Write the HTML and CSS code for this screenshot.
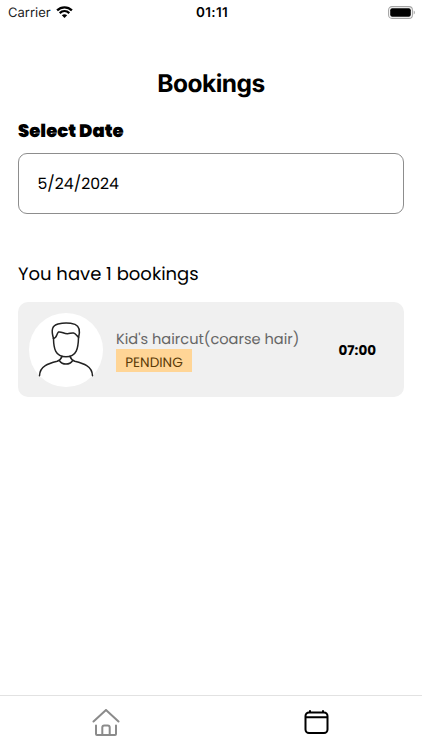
FILE: index.html
```html
<!DOCTYPE html>
<html lang="en">
  <head>
    <meta charset="utf-8" />
    <title>Bookings</title>
    <link rel="stylesheet" href="styles.css">
  </head>
  <body>
    <header class="status">
      <div class="carrier">
        <span>Carrier</span>
        <svg width="17" height="12" viewBox="0 0 17 12">
          <path d="M1.100 4.400C5.300.3 11.700.3 15.900 4.400M3.700 7.100c2.800-2.600 6.800-2.600 9.600 0" fill="none" stroke="#000" stroke-width="2.300" />
          <path d="M5.800 9.300c1.600-1.400 3.800-1.400 5.400 0L8.500 12z" />
        </svg>
      </div>
      <span class="clock">01:11</span>
      <svg class="battery" width="28" height="13" viewBox="0 0 28 13">
        <rect x=".6" y=".6" width="23.800" height="11.800" rx="3.400" fill="none" stroke="#a5a5a5" stroke-width="1.100" />
        <rect x="2.200" y="2.200" width="20.600" height="8.600" rx="2" />
        <path d="M25.700 4.500v4c1.600-.7 1.600-3.300 0-4z" fill="#a5a5a5" />
      </svg>
    </header>

    <main>
      <h1>Bookings</h1>
      <h2>Select Date</h2>
      <div class="date"><span>5/24/2024</span></div>

      <p class="count">You have 1 bookings</p>
      <section class="booking">
        <div class="avatar">
          <svg width="74" height="74" viewBox="0 0 74 74" fill="none" stroke="#222" stroke-width="1.500" stroke-linecap="round" stroke-linejoin="round">
            <path d="M24.500 25.500C22 17 23 12.500 29 11c6-1.500 12-1.300 17 .4 4.500 1.800 5.500 6 3.500 13.400" />
            <path d="M24.500 25.500c3.500-.3 2.800-4.500 5-6.500 3-.8 5.500 2 9 1.800 2.500-.1 3.500-1.100 6-.8 2 .3 3 2.500 5 4" />
            <path d="M24.500 25.500c.2 10 1.700 18.300 12.500 18.300s12.300-8.800 12.500-19.300" />
            <path d="M33 43.300c-.7 2.500-2.500 4-4.700 5-8.500 2.200-17.500 4.500-17.800 14.500M41 43.300c.7 2.500 2.500 4 4.700 5 8.500 2.200 17.500 4.500 17.800 14.500" />
            <path d="M30.300 47.500c3.200 4.800 10.200 4.800 13.400 0" />
          </svg>
        </div>
        <div class="info">
          <p class="service">Kid's haircut(coarse hair)</p>
          <span class="state">PENDING</span>
        </div>
        <time>07:00</time>
      </section>
    </main>

    <nav class="tabs">
      <a class="tab">
        <svg width="28" height="28" viewBox="0 0 28 28" fill="none" stroke="#8b8b8b" stroke-width="2" stroke-linecap="round" stroke-linejoin="round">
          <path d="M1.500 12.500 14 .9l12.500 11.600" />
          <path d="M4 16.500V25a1 1 0 0 0 1 1h18a1 1 0 0 0 1-1v-8.500" />
          <path d="M10.300 26v-7.500a2 2 0 0 1 2-2h3.400a2 2 0 0 1 2 2V26" />
        </svg>
      </a>
      <a class="tab">
        <svg width="26" height="26" viewBox="0 0 26 26" fill="none" stroke="#000" stroke-width="2" stroke-linecap="round">
          <rect x="1.500" y="2.500" width="22" height="20.500" rx="3.500" />
          <path d="M2 7.300h21M6 1v1M19 1v1" />
        </svg>
      </a>
    </nav>
  </body>
</html>
```

FILE: styles.css
```css
body {
  margin: 0;
  height: 750px;
  display: flex;
  flex-direction: column;
  overflow: hidden;
  background: #fff;
  color: #000;
  font-family: Poppins, Inter, sans-serif;
  text-rendering: geometricPrecision;
}

h1, h2, p {
  margin: 0;
}
svg {
  display: block;
}

.status {
  height: 24px;
  padding: 0 6px 0 8px;
  display: grid;
  grid-template-columns: 1fr auto 1fr;
  align-items: center;
  font-family: Inter, sans-serif;
  font-size: 13px;
}
.carrier {
  display: flex;
  align-items: center;
  gap: 5px;
  color: #222;
}
.carrier span {
  padding-top: 1px;
}
.clock {
  padding-top: 1px;
  font-size: 13.5px;
  font-weight: 600;
  letter-spacing: 0.3px;
}
.battery {
  justify-self: end;
}

main {
  flex: 1;
  padding: 0 18px;
}
h1 {
  margin-top: 42px;
  font: 700 24.5px/34px Inter, sans-serif;
  letter-spacing: -0.5px;
  text-align: center;
}
h2 {
  margin-top: 18px;
  font-size: 18px;
  font-weight: 900;
  line-height: 28px;
}
.date {
  height: 59px;
  margin-top: 7px;
  padding-left: 18.5px;
  display: flex;
  align-items: center;
  border: 1px solid #8d8d8d;
  border-radius: 9px;
  font-size: 15.7px;
}
.date span {
  padding-top: 1px;
}
.count {
  margin-top: 46px;
  font-size: 18px;
  line-height: 29px;
}

.booking {
  height: 95px;
  margin-top: 13px;
  padding: 0 28px 0 11px;
  box-sizing: border-box;
  display: flex;
  align-items: center;
  background: #f0f0f0;
  border-radius: 10px;
}
.avatar {
  width: 74px;
  height: 74px;
  background: #fff;
  border-radius: 50%;
}
.info {
  flex: 1;
  margin-left: 13px;
}
.service {
  height: 22px;
  color: #666;
  font-size: 14.6px;
  line-height: 27px;
}
.state {
  display: block;
  width: 76px;
  height: 23px;
  background: #ffd596;
  color: #5c3b08;
  font-size: 13.6px;
  line-height: 27px;
  text-align: center;
}
.booking time {
  padding-top: 2px;
  font-size: 13.5px;
  font-weight: 700;
}

.tabs {
  height: 55px;
  box-sizing: border-box;
  display: flex;
  border-top: 1px solid #e2e2e2;
}
.tab {
  flex: 1;
  display: flex;
  align-items: center;
  justify-content: center;
}
```
